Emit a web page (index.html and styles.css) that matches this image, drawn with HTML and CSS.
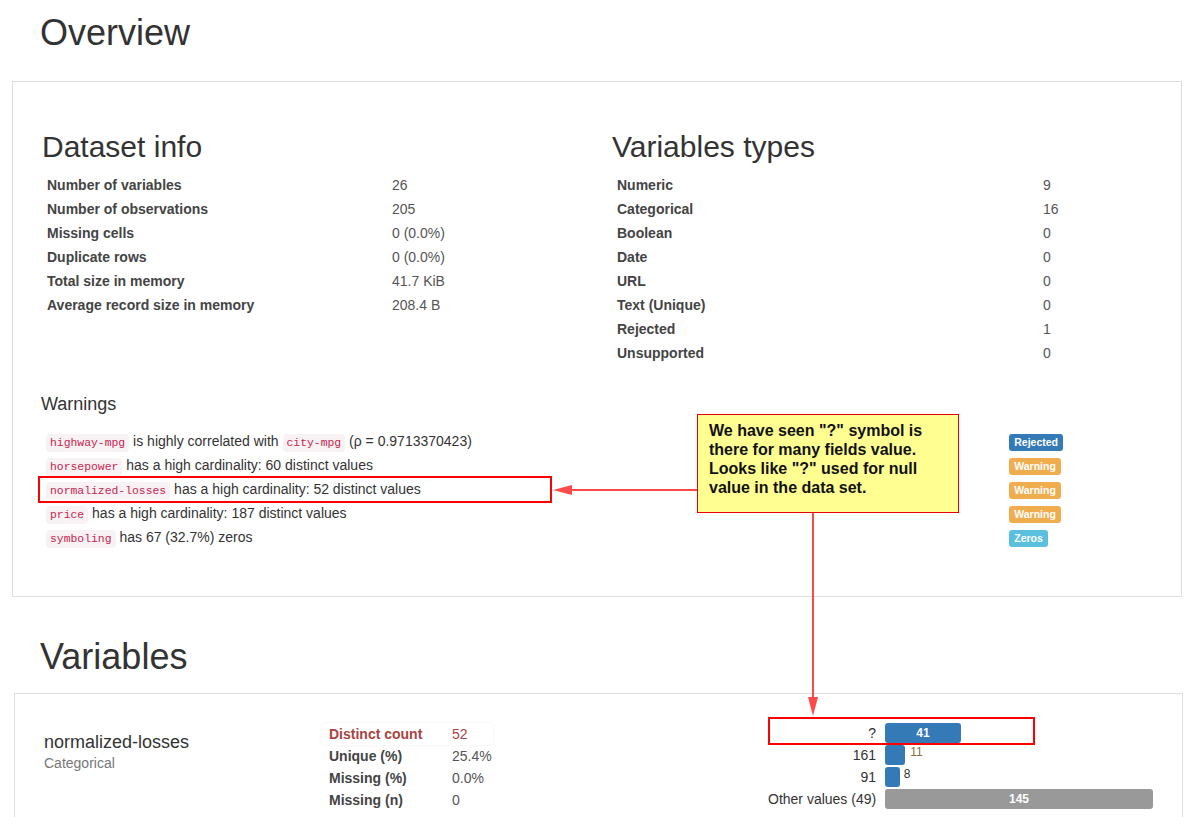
FILE: index.html
```html
<!DOCTYPE html>
<html>
<head>
<meta charset="utf-8">
<title>Overview</title>
<link rel="stylesheet" href="styles.css">
</head>
<body>
<div class="page">
  <h1 class="page-title title-overview">Overview</h1>
  <div class="panel overview">
    <div class="info-grid">
      <div class="info-col">
        <h2 class="sub-title">Dataset info</h2>
        <table class="info dataset">
          <tr><th>Number of variables</th><td>26</td></tr>
          <tr><th>Number of observations</th><td>205</td></tr>
          <tr><th>Missing cells</th><td>0 (0.0%)</td></tr>
          <tr><th>Duplicate rows</th><td>0 (0.0%)</td></tr>
          <tr><th>Total size in memory</th><td>41.7 KiB</td></tr>
          <tr><th>Average record size in memory</th><td>208.4 B</td></tr>
        </table>
      </div>
      <div class="info-col">
        <h2 class="sub-title">Variables types</h2>
        <table class="info types">
          <tr><th>Numeric</th><td>9</td></tr>
          <tr><th>Categorical</th><td>16</td></tr>
          <tr><th>Boolean</th><td>0</td></tr>
          <tr><th>Date</th><td>0</td></tr>
          <tr><th>URL</th><td>0</td></tr>
          <tr><th>Text (Unique)</th><td>0</td></tr>
          <tr><th>Rejected</th><td>1</td></tr>
          <tr><th>Unsupported</th><td>0</td></tr>
        </table>
      </div>
    </div>
    <h3 class="warn-title">Warnings</h3>
    <table class="warnings">
      <tr><td class="warn-text"><code>highway-mpg</code> is highly correlated with <code>city-mpg</code> (ρ = 0.9713370423)</td><td><span class="badge badge-primary">Rejected</span></td></tr>
      <tr><td class="warn-text"><code>horsepower</code> has a high cardinality: 60 distinct values</td><td><span class="badge badge-warning">Warning</span></td></tr>
      <tr><td class="warn-text"><code>normalized-losses</code> has a high cardinality: 52 distinct values</td><td><span class="badge badge-warning">Warning</span></td></tr>
      <tr><td class="warn-text"><code>price</code> has a high cardinality: 187 distinct values</td><td><span class="badge badge-warning">Warning</span></td></tr>
      <tr><td class="warn-text"><code>symboling</code> has 67 (32.7%) zeros</td><td><span class="badge badge-info">Zeros</span></td></tr>
    </table>
  </div>

  <h1 class="page-title title-variables">Variables</h1>
  <div class="panel variables">
    <div class="var-row">
      <div class="var-name">
        <p class="name">normalized-losses</p>
        <p class="type">Categorical</p>
      </div>
      <div class="var-stats">
        <div class="stat stat-alert"><span class="stat-label">Distinct count</span><span>52</span></div>
        <div class="stat"><span class="stat-label">Unique (%)</span><span class="stat-val">25.4%</span></div>
        <div class="stat"><span class="stat-label">Missing (%)</span><span class="stat-val">0.0%</span></div>
        <div class="stat"><span class="stat-label">Missing (n)</span><span class="stat-val">0</span></div>
      </div>
      <div class="var-chart">
        <div class="bar-row"><span class="bar-label">?</span><span class="bar bar-blue" style="width:75.8px">41</span></div>
        <div class="bar-row"><span class="bar-label">161</span><span class="bar bar-blue" style="width:20.3px"></span><span class="bar-out out-brown">11</span></div>
        <div class="bar-row"><span class="bar-label">91</span><span class="bar bar-blue" style="width:14.8px"></span><span class="bar-out">8</span></div>
        <div class="bar-row"><span class="bar-label">Other values (49)</span><span class="bar bar-grey" style="width:268px">145</span></div>
      </div>
    </div>
  </div>

  <div class="mark mark-warning"></div>
  <div class="note">We have seen "?" symbol is<br>there for many fields value.<br>Looks like "?" used for null<br>value in the data set.</div>
  <div class="mark mark-bar"></div>
  <svg class="arrows" width="1195" height="817" viewBox="0 0 1195 817">
    <line x1="697" y1="491" x2="568" y2="491" stroke="#ff4a4a" stroke-width="2"/>
    <polygon points="553,491 572,486 572,496" fill="#ff4a4a"/>
    <line x1="813" y1="514" x2="813" y2="702" stroke="#ff4a4a" stroke-width="2"/>
    <polygon points="813,717 808,698 818,698" fill="#ff4a4a"/>
  </svg>
</div>
</body>
</html>
```

FILE: styles.css
```css
* { box-sizing: border-box; }

body {
  margin: 0;
  font-family: "Liberation Sans", Arial, sans-serif;
  font-size: 14px;
  line-height: 20px;
  color: #333;
  background: #fff;
}

.page {
  position: relative;
  width: 1195px;
  padding: 1px 0 0 0;
  margin-top: -1px;
}

.page-title {
  font-size: 36px;
  font-weight: normal;
  line-height: 1.1;
  margin: 0;
  padding-left: 40px;
  color: #333;
}

.title-overview { margin-top: 13px; margin-bottom: 28.4px; }
.title-variables { margin-top: 40px; margin-bottom: 16.4px; }

.panel {
  border: 1px solid #ddd;
  background: #fff;
}

.overview {
  margin-left: 12px;
  width: 1170px;
  padding: 48px 29px 47px 29px;
}

.info-grid {
  display: grid;
  grid-template-columns: 570px 1fr;
}

.sub-title {
  font-size: 30px;
  font-weight: normal;
  line-height: 1.1;
  margin: 0 0 10px 0;
  color: #333;
}

.info {
  border-collapse: collapse;
}

.info th, .info td {
  padding: 2px 5px;
  line-height: 20px;
  text-align: left;
  vertical-align: top;
}

.info th { font-weight: bold; color: #444; }
.info td { color: #555; }

.dataset th { width: 345px; }
.types th { width: 426px; }

.warn-title {
  font-size: 18px;
  font-weight: normal;
  line-height: 1.1;
  margin: 30px 0 14px -1px;
  color: #333;
}

.warnings {
  border-collapse: collapse;
  margin-left: -1px;
}

.warnings td {
  padding: 2px 5px;
  line-height: 20px;
  vertical-align: middle;
}

.warn-text { width: 963px; }

code {
  font-family: "Liberation Mono", "DejaVu Sans Mono", monospace;
  font-size: 11.4px;
  line-height: 1;
  padding: 3px 4px;
  color: #c7254e;
  background: #f9f2f4;
  border-radius: 4px;
}

.badge {
  display: inline;
  font-size: 10.5px;
  font-weight: bold;
  line-height: 1;
  color: #fff;
  padding: 0.2em 0.5em 0.3em;
  border-radius: 3px;
  white-space: nowrap;
}

.badge-primary { background: #337ab7; }
.badge-warning { background: #f0ad4e; }
.badge-info { background: #5bc0de; }

.variables {
  margin-left: 14px;
  width: 1169px;
  min-height: 160px;
  padding: 29px 29px 20px 29px;
}

.var-row {
  display: flex;
  align-items: flex-start;
}

.var-name {
  width: 278px;
  padding-top: 10px;
}

.var-name p { margin: 0; }

.name {
  font-size: 18px;
  line-height: 1.1;
  color: #333;
}

.type {
  font-size: 14px;
  line-height: 20px;
  color: #777;
}

.var-stats {
  width: 446px;
  display: flex;
  flex-direction: column;
}

.stat {
  display: grid;
  grid-template-columns: 123px auto;
  width: 171px;
  padding: 1px 7px;
  line-height: 20px;
  color: #555;
}

.stat-label { font-weight: bold; color: #444; }

.stat-alert {
  color: #a94442;
  border-radius: 4px;
  box-shadow: 0 0 3px rgba(0, 0, 0, 0.08);
}

.stat-alert .stat-label { color: #a94442; }

.var-chart {
  display: flex;
  flex-direction: column;
  margin-top: -1px;
}

.bar-row {
  display: flex;
  align-items: flex-start;
  height: 22px;
  padding: 1px 0;
}

.bar-label {
  width: 108px;
  margin-right: 9px;
  text-align: right;
  line-height: 20px;
  color: #333;
  white-space: nowrap;
}

.bar {
  height: 20px;
  border-radius: 3px;
  color: #fff;
  font-size: 12px;
  font-weight: bold;
  line-height: 20px;
  text-align: center;
}

.bar-blue { background: #337ab7; }
.bar-grey { background: #999; }

.bar-out {
  margin-left: 4px;
  font-size: 12px;
  line-height: 14px;
  color: #333;
}

.out-brown { color: #8a6d3b; margin-left: 5px; }

.mark {
  position: absolute;
  border: 2px solid #f00;
}

.mark-warning {
  left: 38px;
  top: 477px;
  width: 514px;
  height: 27px;
}

.mark-bar {
  left: 768px;
  top: 718px;
  width: 267px;
  height: 28px;
}

.note {
  position: absolute;
  left: 697px;
  top: 415px;
  width: 262px;
  height: 99px;
  padding: 6px 8px 0 11px;
  background: #ffff91;
  border: 1px solid #e8000b;
  font-size: 16px;
  font-weight: bold;
  line-height: 19px;
  color: #111;
}

.arrows {
  position: absolute;
  left: 0;
  top: 0;
  pointer-events: none;
}
```
